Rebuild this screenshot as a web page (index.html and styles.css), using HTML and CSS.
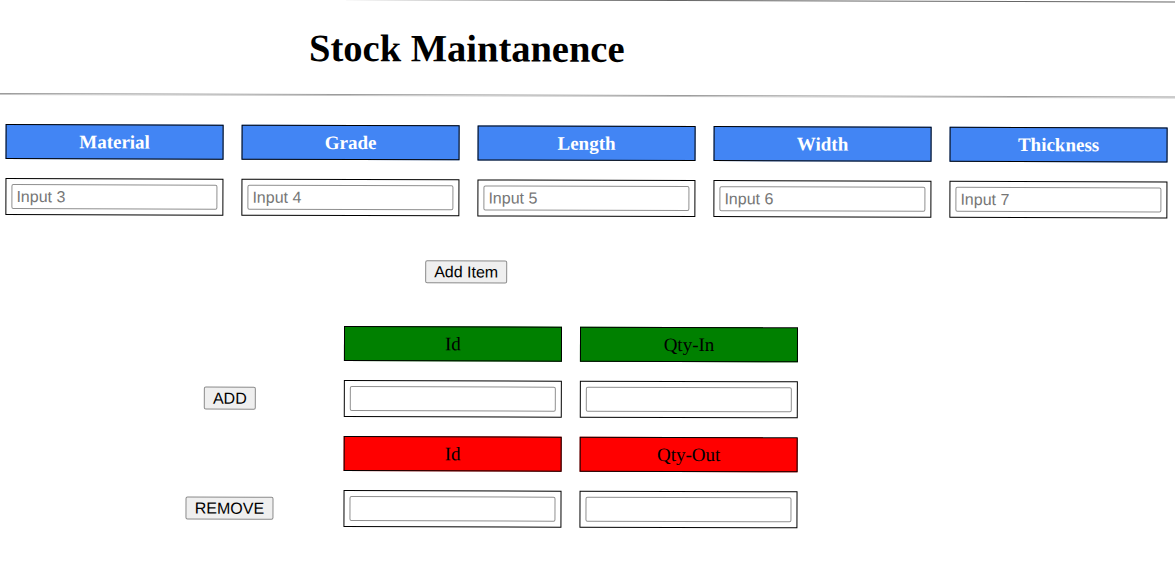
FILE: index.html
```html
<!DOCTYPE html>
<html lang="en">
<head>
<meta charset="utf-8">
<title>Stock Maintanence</title>
<link rel="stylesheet" href="styles.css">
</head>
<body>
<div class="page">
  <header class="head">
    <h1 class="title">Stock Maintanence</h1>
  </header>
  <hr class="rule">

  <section class="specs">
    <div class="cell head-cell">Material</div>
    <div class="cell head-cell">Grade</div>
    <div class="cell head-cell">Length</div>
    <div class="cell head-cell">Width</div>
    <div class="cell head-cell">Thickness</div>
    <div class="cell input-cell"><input class="field" type="text" placeholder="Input 3"></div>
    <div class="cell input-cell"><input class="field" type="text" placeholder="Input 4"></div>
    <div class="cell input-cell"><input class="field" type="text" placeholder="Input 5"></div>
    <div class="cell input-cell"><input class="field" type="text" placeholder="Input 6"></div>
    <div class="cell input-cell"><input class="field" type="text" placeholder="Input 7"></div>
  </section>

  <div class="actions">
    <button class="btn" type="button">Add Item</button>
  </div>

  <section class="stock">
    <div class="spacer"></div>
    <div class="cell label-cell in">Id</div>
    <div class="cell label-cell in">Qty-In</div>

    <div class="btn-cell"><button class="btn" type="button">ADD</button></div>
    <div class="cell input-cell"><input class="field" type="text"></div>
    <div class="cell input-cell"><input class="field" type="text"></div>

    <div class="spacer"></div>
    <div class="cell label-cell out">Id</div>
    <div class="cell label-cell out">Qty-Out</div>

    <div class="btn-cell"><button class="btn" type="button">REMOVE</button></div>
    <div class="cell input-cell"><input class="field" type="text"></div>
    <div class="cell input-cell"><input class="field" type="text"></div>
  </section>
</div>
</body>
</html>
```

FILE: styles.css
```css
html {
  overflow: hidden;
}

html, body {
  margin: 0;
  padding: 0;
  background: #ffffff;
}

body {
  font-family: "Liberation Serif", "Times New Roman", serif;
  color: #000;
  padding-top: 1px;
}

.page {
  margin-top: -3px;
  border-top: 1px solid #666;
  transform: rotate(0.17deg);
  transform-origin: 0 0;
  width: 1200px;
  padding-bottom: 40px;
}

.head {
  width: 934px;
  padding-top: 27px;
  padding-bottom: 2px;
  text-align: center;
}

.title {
  margin: 0;
  font-size: 38.5px;
  line-height: 42px;
  font-weight: bold;
}

.rule {
  margin: 23px 0 0 0;
  height: 0;
  border: 0;
  border-top: 1px solid #9c9c9c;
  border-bottom: 1px solid #c8c8c8;
  width: 1200px;
}

.specs {
  display: grid;
  grid-template-columns: repeat(5, 218px);
  grid-template-rows: 35px 37px;
  column-gap: 18px;
  row-gap: 19px;
  margin-top: 29px;
  padding-left: 6px;
}

.cell {
  box-sizing: border-box;
  border: 1px solid #000;
}

.head-cell {
  background: #4285f4;
  color: #fff;
  font-weight: bold;
  font-size: 19px;
  line-height: 33px;
  text-align: center;
}

.input-cell {
  padding: 5px;
  display: flex;
  align-items: center;
}

.field {
  box-sizing: border-box;
  width: 100%;
  height: 25px;
  margin: 0;
  padding: 1px 4px;
  border: 1px solid #8f8f8f;
  border-radius: 2px;
  font-family: "Liberation Sans", Arial, sans-serif;
  font-size: 16px;
  color: #000;
  background: #fff;
}

.field::placeholder {
  color: #767676;
}

.actions {
  width: 934px;
  margin-top: 44px;
  text-align: center;
}

.btn {
  box-sizing: border-box;
  margin: 0;
  padding: 1px 8px;
  height: 23px;
  line-height: 19px;
  border: 1px solid #8a8a8a;
  border-radius: 2px;
  background: #efefef;
  color: #000;
  font-family: "Liberation Sans", Arial, sans-serif;
  font-size: 16px;
}

.stock {
  display: grid;
  grid-template-columns: 192px 218px 218px;
  grid-template-rows: 35px 37px 35px 37px;
  column-gap: 18px;
  row-gap: 19px;
  margin-top: 43px;
  padding-left: 135px;
}

.label-cell {
  font-size: 19px;
  line-height: 33px;
  text-align: center;
  color: #000;
}

.label-cell.in {
  background: #008000;
}

.label-cell.out {
  background: #ff0000;
}

.btn-cell {
  display: flex;
  align-items: center;
  justify-content: center;
}
```
